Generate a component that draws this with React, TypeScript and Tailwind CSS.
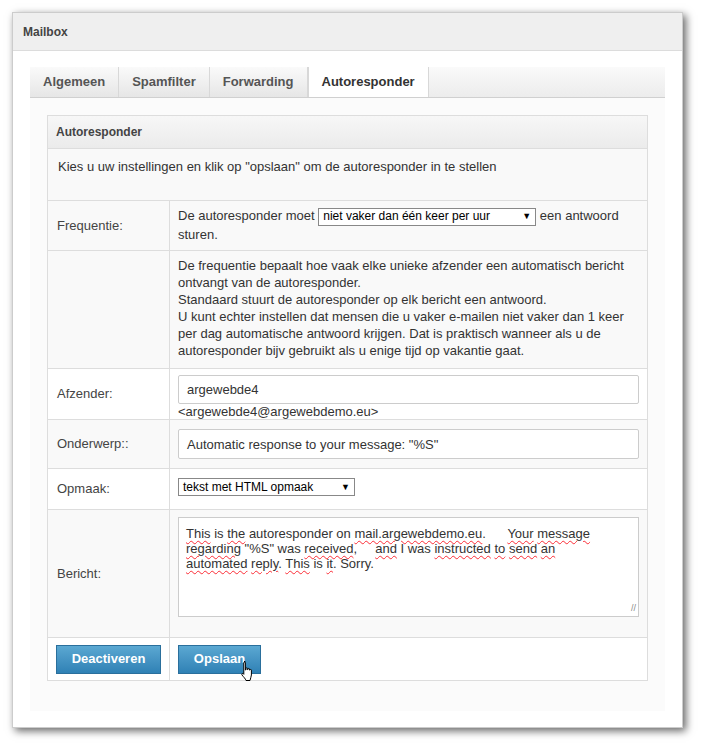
import React from "react";

const Row = ({ label, children, h, bg = "bg-[#f9f9f9]" }: any) => (
  <div className={`flex border-t border-[#dddddd] ${bg}`} style={{ height: h }}>
    <div className="w-[122px] shrink-0 border-r border-[#dddddd] px-[9px] flex items-center text-[13px] text-[#444]">{label}</div>
    <div className="flex-1 px-[8px] py-[6px] text-[13px] text-[#333] leading-[17px]">{children}</div>
  </div>
);

const U = ({ children }: any) => (
  <span className="underline decoration-wavy decoration-red-500 decoration-[1px] underline-offset-2">{children}</span>
);

export default function App() {
  return (
    <div className="w-[702px] h-[749px] bg-white pt-[12px] pl-[12px]" style={{ fontFamily: "Arial, 'Liberation Sans', sans-serif" }}>
      <div className="w-[671px] h-[716px] bg-white shadow-[3px_3px_8px_rgba(0,0,0,0.6)] border border-[#ccc] flex flex-col">
        <div className="h-[38px] bg-[#efefef] border-b border-[#dcdcdc] flex items-center px-[10px] text-[12px] font-bold text-[#444]">Mailbox</div>
        <div className="flex-1 bg-white px-[17px] pt-[16px]">
          <div className="flex border-b border-[#d0d0d0] h-[31px]">
            {["Algemeen", "Spamfilter", "Forwarding", "Autoresponder"].map((t, i) => (
              <div key={t} className={`px-[13px] flex items-center text-[13px] font-bold border-r border-[#d8d8d8] ${i === 3 ? "bg-white text-[#333] border-l" : "bg-gradient-to-b from-[#fafafa] to-[#e6e6e6] text-[#555]"}`}>{t}</div>
            ))}
            <div className="flex-1 bg-gradient-to-b from-[#fafafa] to-[#ececec]" />
          </div>
          <div className="bg-[#fbfbfb] px-[17px] pt-[17px] pb-[30px]">
            <div className="border border-[#dddddd] bg-white">
              <div className="h-[32px] bg-gradient-to-b from-[#f7f7f7] to-[#ebebeb] flex items-center px-[8px] text-[12px] font-bold text-[#444]">Autoresponder</div>
              <div className="h-[52px] border-t border-[#dddddd] bg-[#f9f9f9] px-[10px] pt-[8px] text-[13px] text-[#333]">Kies u uw instellingen en klik op "opslaan" om de autoresponder in te stellen</div>
              <Row label="Frequentie:" h={50}>
                De autoresponder moet{" "}
                <span className="inline-flex items-center justify-between w-[218px] h-[18px] border border-[#888] bg-white px-[4px] align-middle text-[12px] text-black whitespace-nowrap overflow-hidden">niet vaker dan één keer per uur <span className="text-[9px] ml-1">▼</span></span>{" "}
                een antwoord sturen.
              </Row>
              <Row label="" h={118}>
                De frequentie bepaalt hoe vaak elke unieke afzender een automatisch bericht ontvangt van de autoresponder.<br />
                Standaard stuurt de autoresponder op elk bericht een antwoord.<br />
                U kunt echter instellen dat mensen die u vaker e-mailen niet vaker dan 1 keer per dag automatische antwoord krijgen. Dat is praktisch wanneer als u de autoresponder bijv gebruikt als u enige tijd op vakantie gaat.
              </Row>
              <Row label="Afzender:" h={51} bg="bg-white">
                <div className="h-[29px] border border-[#ccc] rounded-[2px] px-[8px] flex items-center">argewebde4</div>
                <div className="leading-[15px]">&lt;argewebde4@argewebdemo.eu&gt;</div>
              </Row>
              <Row label="Onderwerp::" h={49}>
                <div className="mt-[3px] h-[30px] border border-[#ccc] rounded-[2px] px-[8px] flex items-center bg-white">Automatic response to your message: "%S"</div>
              </Row>
              <Row label="Opmaak:" h={41} bg="bg-white">
                <span className="mt-[3px] inline-flex items-center justify-between w-[177px] h-[18px] border border-[#888] bg-white px-[4px] text-[12px] text-black">tekst met HTML opmaak <span className="text-[9px]">▼</span></span>
              </Row>
              <Row label="Bericht:" h={128}>
                <div className="relative mt-[1px] h-[100px] border border-[#ccc] bg-white pl-[7px] pr-[45px] py-[8px] leading-[15px] text-[#333]">
                  <U>This</U> is <U>the</U> autoresponder on <U>mail.argewebdemo.eu</U>. &nbsp;&nbsp;&nbsp;&nbsp; <U>Your</U> <U>message</U> <U>regarding</U> "%S" was <U>received</U>, &nbsp;&nbsp;&nbsp; <U>and</U> I was <U>instructed</U> <U>to</U> <U>send</U> <U>an</U> <U>automated</U> <U>reply</U>. <U>This</U> is <U>it</U>. Sorry.
                  <span className="absolute right-[2px] bottom-[0px] text-[9px] text-[#888]">//</span>
                </div>
              </Row>
              <div className="flex border-t border-[#dddddd] bg-white h-[43px]">
                <div className="w-[122px] border-r border-[#dddddd] px-[8px] flex items-center">
                  <button className="w-[106px] h-[29px] bg-gradient-to-b from-[#5ba8d2] to-[#2f81b5] border border-[#2a6f9c] text-white text-[13px] font-bold">Deactiveren</button>
                </div>
                <div className="px-[8px] flex items-center relative">
                  <button className="w-[83px] h-[29px] bg-gradient-to-b from-[#5ba8d2] to-[#2f81b5] border border-[#2a6f9c] text-white text-[13px] font-bold">Opslaan</button>
                  <svg className="absolute left-[70px] top-[22px]" width="16" height="22" viewBox="0 0 16 22"><path d="M4 1.5c.8 0 1.4.6 1.4 1.4V10l.6-.2V8.4c0-.8 1.4-.8 1.4 0v1.2l.6-.1V9c0-.8 1.4-.8 1.4 0v1l.6.1c0-.8 1.4-.8 1.4 0V15c0 2-1.2 3.5-1.4 5.5H6c-.5-1.8-2.5-3.5-4-5.5-.7-1 .3-2 1.2-1.3l.6.6V2.9c0-.8.6-1.4 1.4-1.4z" fill="#fff" stroke="#000" strokeWidth="1"/></svg>
                </div>
              </div>
            </div>
          </div>
        </div>
      </div>
    </div>
  );
}
